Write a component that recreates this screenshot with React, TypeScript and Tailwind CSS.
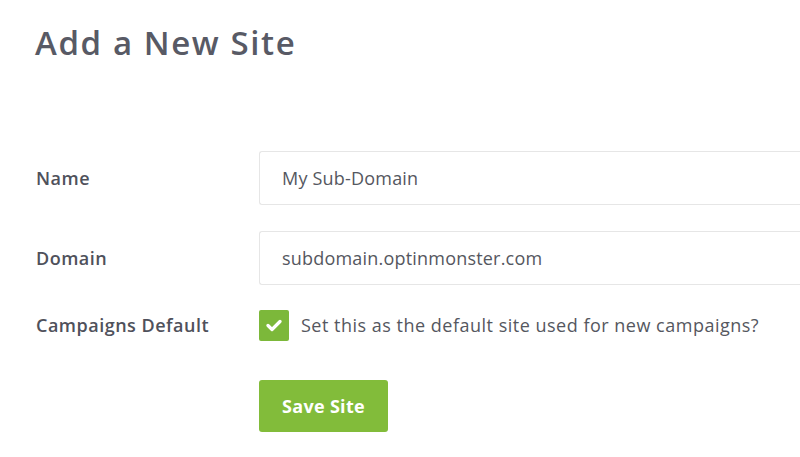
import React from "react";

export default function App() {
  return (
    <div className="w-[800px] h-[457px] bg-white overflow-hidden text-[#4f515b]" style={{ fontFamily: "'Open Sans', Lato, sans-serif" }}>
      <div className="pl-[35px] pt-[21px]">
        <h1 className="text-[33px] leading-[44px] font-semibold text-[#585a65] tracking-[1.6px]">Add a New Site</h1>
      </div>
      <div className="mt-[86px] flex flex-col">
        <div className="flex items-center h-[54px]">
          <div className="w-[259px] pl-[36px] text-[18px] font-semibold text-[#4f515b] tracking-[0.5px]">Name</div>
          <div className="flex-1 h-[54px] border border-[#e6e6e6] rounded-[3px] rounded-r-none border-r-0 flex items-center pl-[22px] text-[18px] text-[#555760] tracking-[0.2px]">My Sub-Domain</div>
        </div>
        <div className="flex items-center h-[54px] mt-[26px]">
          <div className="w-[259px] pl-[36px] text-[18px] font-semibold text-[#4f515b] tracking-[0.5px]">Domain</div>
          <div className="flex-1 h-[54px] border border-[#e6e6e6] rounded-[3px] rounded-r-none border-r-0 flex items-center pl-[22px] text-[18px] text-[#555760] tracking-[0.2px]">subdomain.optinmonster.com</div>
        </div>
        <div className="flex items-center h-[31px] mt-[25px]">
          <div className="w-[259px] pl-[36px] text-[18px] font-semibold text-[#4f515b] tracking-[0.5px]">Campaigns Default</div>
          <div className="flex items-center">
            <div className="w-[30px] h-[31px] bg-[#7cb83a] rounded-[2px] flex items-center justify-center">
              <svg width="16" height="13" viewBox="0 0 16 13">
                <path d="M2 6.5 L6 10.5 L14 2.5" stroke="white" strokeWidth="3.2" fill="none" strokeLinecap="round" strokeLinejoin="round" />
              </svg>
            </div>
            <span className="ml-[12px] text-[18px] text-[#555760] tracking-[0.5px]">Set this as the default site used for new campaigns?</span>
          </div>
        </div>
        <div className="pl-[259px] mt-[39px]">
          <button className="w-[129px] h-[52px] bg-[#82bc3a] rounded-[3px] text-white text-[18px] font-bold tracking-[0.3px]">Save Site</button>
        </div>
      </div>
    </div>
  );
}
